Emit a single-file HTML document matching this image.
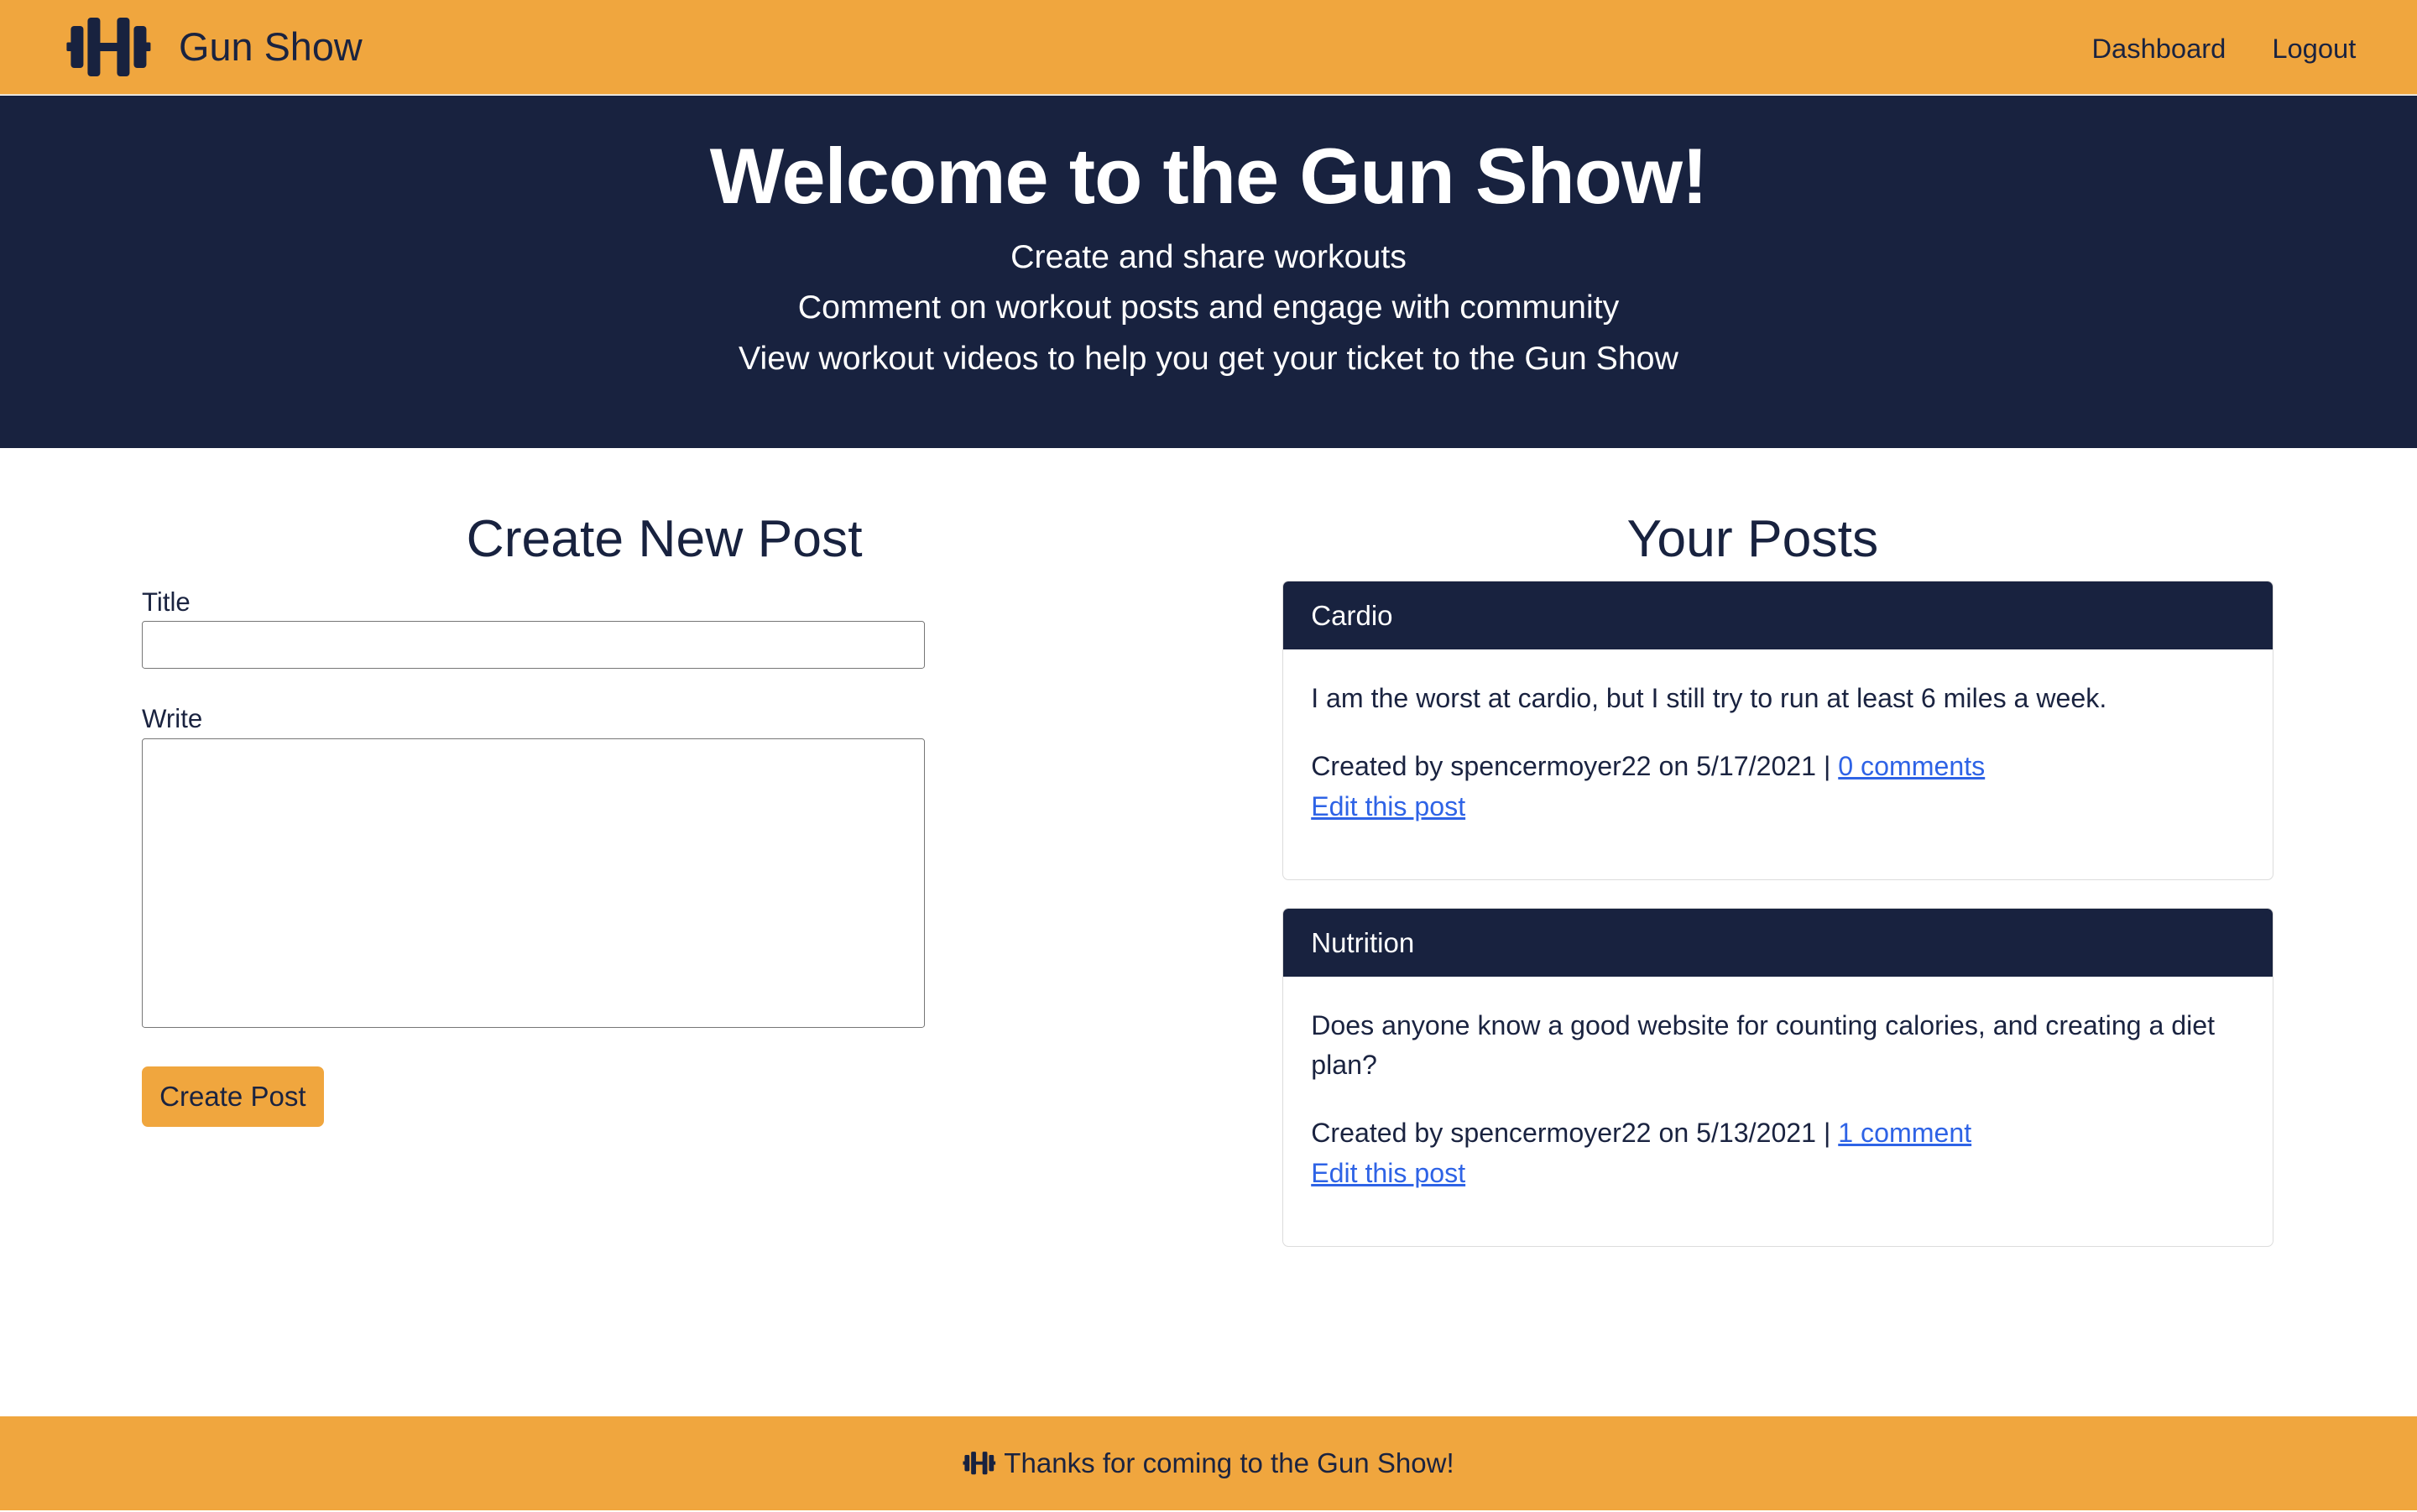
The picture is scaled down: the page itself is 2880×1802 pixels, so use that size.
<!DOCTYPE html>
<html><head><meta charset="utf-8"><style>
html,body{margin:0;padding:0;}
body{width:2880px;height:1800px;overflow:hidden;background:#fff;}
#w{zoom:1.83673;width:1568px;height:980px;position:relative;font-family:"Liberation Sans",sans-serif;color:#1a2340;}
.a{position:absolute;}
nav{position:absolute;left:0;top:0;width:1568px;height:61px;background:#f0a63e;border-bottom:1px solid #e8d6b8;}
.hero{position:absolute;left:0;top:62px;width:1568px;height:229px;background:#18223f;color:#fff;text-align:center;}
.hero h1{margin:0;position:absolute;top:23px;width:100%;font-size:51px;font-weight:bold;letter-spacing:-0.5px;}
.hero p{margin:0;position:absolute;width:100%;font-size:21.4px;line-height:33px;top:88px;}
h2{margin:0;font-size:34px;font-weight:normal;position:absolute;text-align:center;color:#18223f;}
label{position:absolute;font-size:17px;left:92px;}
.inp{position:absolute;left:92px;width:507px;border:1px solid #767676;border-radius:2px;background:#fff;}
.btn{position:absolute;left:92px;top:692px;width:118px;height:39px;background:#f0a63e;border-radius:4px;font-size:18px;line-height:40px;text-align:center;}
.card{position:absolute;left:832px;width:642px;border:1px solid #dcdcdc;border-radius:4px;overflow:hidden;background:#fff;}
.ch{background:#18223f;color:#fff;height:44px;line-height:46px;padding-left:18px;font-size:18px;}
.cb{padding:19px 18px 0 18px;font-size:17.5px;line-height:26px;}
a{color:#2e63e6;text-decoration:underline;}
footer{position:absolute;left:0;top:919px;width:1568px;height:61px;background:#f0a63e;text-align:center;font-size:18px;line-height:62px;}
</style></head><body><div id="w">
<nav>
<svg class="a" style="left:43px;top:0" width="56" height="61" viewBox="80 0 102 112">
<g fill="#18223f">
<rect x="80" y="50.5" width="8" height="10.5" rx="1.5"/>
<rect x="85" y="31" width="15" height="50" rx="4"/>
<rect x="105" y="21" width="15" height="70" rx="4"/>
<rect x="118" y="51" width="24" height="10"/>
<rect x="140" y="21" width="15" height="70" rx="4"/>
<rect x="160" y="31" width="15" height="50" rx="4"/>
<rect x="172" y="50.5" width="8" height="10.5" rx="1.5"/>
</g></svg>
<div class="a" style="left:116px;top:16px;font-size:25.5px;">Gun Show</div>
<div class="a" style="left:1357px;top:21px;font-size:17.8px;">Dashboard</div>
<div class="a" style="left:1474px;top:21px;font-size:17.8px;">Logout</div>
</nav>
<div class="hero">
<h1>Welcome to the Gun Show!</h1>
<p>Create and share workouts<br>Comment on workout posts and engage with community<br>View workout videos to help you get your ticket to the Gun Show</p>
</div>
<h2 style="left:92px;width:678px;top:330px;">Create New Post</h2>
<label style="top:381px;">Title</label>
<div class="inp" style="top:403px;height:30px;"></div>
<label style="top:457px;">Write</label>
<div class="inp" style="top:479px;height:187px;"></div>
<div class="btn">Create Post</div>
<h2 style="left:832px;width:610px;top:330px;">Your Posts</h2>
<div class="card" style="top:377px;height:193px;">
<div class="ch">Cardio</div>
<div class="cb"><div style="margin-bottom:18px">I am the worst at cardio, but I still try to run at least 6 miles a week.</div>Created by spencermoyer22 on 5/17/2021 | <a>0 comments</a><br><a>Edit this post</a></div>
</div>
<div class="card" style="top:589px;height:219px;">
<div class="ch">Nutrition</div>
<div class="cb"><div style="margin-bottom:18px">Does anyone know a good website for counting calories, and creating a diet plan?</div>Created by spencermoyer22 on 5/13/2021 | <a>1 comment</a><br><a>Edit this post</a></div>
</div>
<footer><svg width="22" height="16" viewBox="80 18 102 76" style="vertical-align:-2px"><g fill="#18223f">
<rect x="80" y="50.5" width="8" height="10.5"/><rect x="85" y="31" width="15" height="50" rx="4"/><rect x="105" y="21" width="15" height="70" rx="4"/><rect x="118" y="51" width="24" height="10"/><rect x="140" y="21" width="15" height="70" rx="4"/><rect x="160" y="31" width="15" height="50" rx="4"/><rect x="172" y="50.5" width="8" height="10.5"/></g></svg> Thanks for coming to the Gun Show!</footer>
</div></body></html>
